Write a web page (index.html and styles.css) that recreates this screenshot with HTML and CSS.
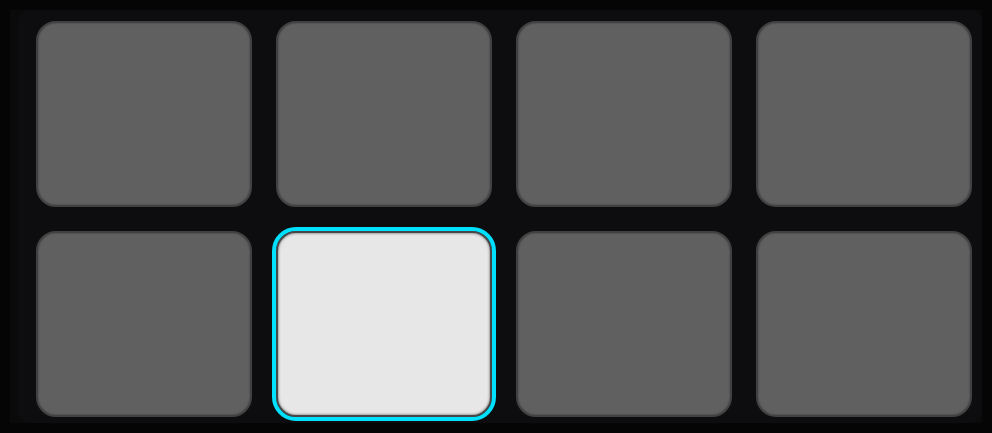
FILE: index.html
```html
<!DOCTYPE html>
<html>
<head>
<meta charset="utf-8">
<link rel="stylesheet" href="styles.css">
</head>
<body>
<div class="frame">
  <div class="panel">
    <div class="grid">
      <div class="tile"></div>
      <div class="tile"></div>
      <div class="tile"></div>
      <div class="tile"></div>
      <div class="tile"></div>
      <div class="tile selected"></div>
      <div class="tile"></div>
      <div class="tile"></div>
    </div>
  </div>
</div>
</body>
</html>
```
FILE: styles.css
```css
html, body {
  margin: 0;
  padding: 0;
  background: #050505;
  width: 992px;
  height: 433px;
  overflow: hidden;
}
.frame {
  margin: 10px 0 0 10px;
  width: 972px;
  height: 413px;
  background: #0a0a0a;
  display: flex;
}
.panel {
  margin-left: 8px;
  flex: 1;
  background: #0d0d0f;
  border-radius: 12px;
  padding: 11px 10px 6px 18px;
}
.grid {
  display: grid;
  grid-template-columns: repeat(4, 216px);
  grid-template-rows: repeat(2, 186px);
  gap: 24px;
}
.tile {
  box-sizing: border-box;
  background: #606060;
  border: 2px solid #414141;
  border-radius: 20px;
  box-shadow: inset 0 0 2px rgba(0,0,0,0.4);
}
.tile.selected {
  background: #e7e7e7;
  border-color: #474747;
  box-shadow: inset 0 0 3px rgba(0,0,0,0.6);
  outline: 4px solid #00e1ff;
  outline-offset: 0;
}
```
